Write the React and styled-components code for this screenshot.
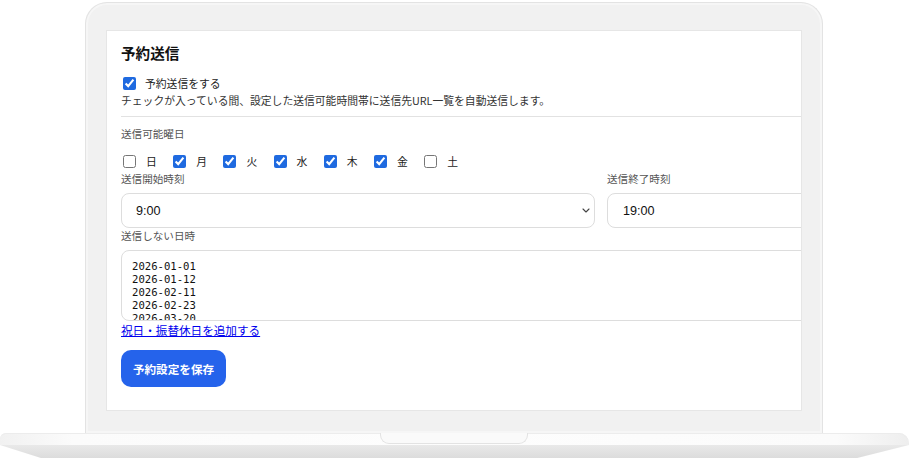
import styled, { createGlobalStyle } from "styled-components";

const GlobalStyle = createGlobalStyle`
    html, body {
        margin: 0;
        padding: 0;
        background: #ffffff;
    }
    body {
        width: 910px;
        height: 458px;
        overflow: hidden;
        font-family: "Noto Sans CJK JP", "Noto Sans", sans-serif;
    }
`;

const days = [
    { label: "日", on: false },
    { label: "月", on: true },
    { label: "火", on: true },
    { label: "水", on: true },
    { label: "木", on: true },
    { label: "金", on: true },
    { label: "土", on: false },
];

const skipDates = [
    "2026-01-01",
    "2026-01-12",
    "2026-02-11",
    "2026-02-23",
    "2026-03-20",
    "2026-04-29",
    "2026-05-04",
];

const App = () => {
    return (
        <>
            <GlobalStyle />
            <Stage>
                <Lid>
                    <Screen>
                        <Form>
                            <Title>予約送信</Title>
                            <CheckRow>
                                <Check type="checkbox" defaultChecked />
                                <CheckText>予約送信をする</CheckText>
                            </CheckRow>
                            <Help>チェックが入っている間、設定した送信可能時間帯に送信先URL一覧を自動送信します。</Help>
                            <Divider />
                            <FieldLabel $top={9}>送信可能曜日</FieldLabel>
                            <Days>
                                {days.map((d) => (
                                    <Day key={d.label}>
                                        <Check type="checkbox" defaultChecked={d.on} />
                                        <span>{d.label}</span>
                                    </Day>
                                ))}
                            </Days>
                            <TimeGrid>
                                <Field>
                                    <FieldLabel>送信開始時刻</FieldLabel>
                                    <SelectWrap>
                                        <Select defaultValue="9:00">
                                            <option>8:00</option>
                                            <option>9:00</option>
                                            <option>10:00</option>
                                        </Select>
                                        <Chevron width="8" height="5" viewBox="0 0 8 5">
                                            <path d="M1 1l3 3 3-3" fill="none" stroke="#444" strokeWidth="1.1" strokeLinecap="round" strokeLinejoin="round" />
                                        </Chevron>
                                    </SelectWrap>
                                </Field>
                                <Field>
                                    <FieldLabel>送信終了時刻</FieldLabel>
                                    <TimeInput defaultValue="19:00" />
                                </Field>
                            </TimeGrid>
                            <FieldLabel>送信しない日時</FieldLabel>
                            <DateArea defaultValue={skipDates.join("\n")} />
                            <HolidayLink href="#">祝日・振替休日を追加する</HolidayLink>
                            <SaveButton>予約設定を保存</SaveButton>
                        </Form>
                    </Screen>
                </Lid>
                <Base>
                    <BaseTop>
                        <Notch />
                    </BaseTop>
                    <BaseBottom />
                </Base>
            </Stage>
        </>
    );
};

export default App;

const Stage = styled.div`
    width: 910px;
    height: 458px;
    display: flex;
    flex-direction: column;
`;

const Lid = styled.div`
    box-sizing: border-box;
    width: 738px;
    height: 431px;
    margin: 2px 0 0 85px;
    padding: 28px 21px 23px 21px;
    background: #f1f1f1;
    border: 1px solid #e3e3e3;
    border-bottom: none;
    border-radius: 22px 22px 0 0;
    box-shadow: inset 0 0 0 2px #f6f6f6;
    display: flex;
`;

const Screen = styled.div`
    flex: 1;
    background: #ffffff;
    overflow: hidden;
    box-shadow: 0 0 0 1px #e6e6e6;
`;

const Form = styled.div`
    width: 960px;
    padding: 11px 0 0 14px;
    display: flex;
    flex-direction: column;
    align-items: flex-start;
    color: #222;
`;

const Title = styled.h2`
    margin: 0;
    font-size: 14.6px;
    line-height: 22px;
    font-weight: 700;
    color: #111;
`;

const CheckRow = styled.label`
    margin-top: 10px;
    height: 18px;
    display: flex;
    align-items: center;
    gap: 9px;
    padding-left: 2px;
`;

const Check = styled.input`
    width: 13px;
    height: 13px;
    margin: 0;
    accent-color: #1f6ae0;
`;

const CheckText = styled.span`
    font-size: 10.8px;
    color: #222;
`;

const Help = styled.p`
    margin: 0;
    font-size: 10.8px;
    line-height: 16px;
    color: #333;
`;

const Divider = styled.hr`
    align-self: stretch;
    margin: 8px 0 0 0;
    border: none;
    border-top: 1px solid #e2e2e2;
`;

const FieldLabel = styled.div`
    margin-top: ${(p) => p.$top || 0}px;
    font-size: 10.6px;
    line-height: 16px;
    color: #555;
`;

const Days = styled.div`
    margin-top: 10px;
    height: 18px;
    padding-left: 2px;
    display: flex;
    align-items: center;
    gap: 16.2px;
`;

const Day = styled.label`
    display: inline-flex;
    align-items: center;
    gap: 10px;
    font-size: 10.8px;
    color: #222;

    span {
        width: 11px;
    }
`;

const TimeGrid = styled.div`
    margin-top: 1px;
    display: grid;
    grid-template-columns: 474px 474px;
    column-gap: 12px;
`;

const Field = styled.div`
    display: flex;
    flex-direction: column;
    gap: 6px;
`;

const SelectWrap = styled.div`
    position: relative;
`;

const boxBase = `
    box-sizing: border-box;
    width: 100%;
    height: 35px;
    border: 1px solid #dddddd;
    border-radius: 8px;
    background: #ffffff;
    font-family: "Liberation Sans", Arial, sans-serif;
    font-size: 12.6px;
    color: #111;
    outline: none;
`;

const Select = styled.select`
    ${boxBase}
    appearance: none;
    padding: 0 0 0 14px;
`;

const Chevron = styled.svg`
    position: absolute;
    right: 5px;
    top: 15px;
    pointer-events: none;
`;

const TimeInput = styled.input`
    ${boxBase}
    padding: 0 0 0 15px;
`;

const DateArea = styled.textarea`
    box-sizing: border-box;
    width: 960px;
    height: 71px;
    margin-top: 6px;
    padding: 9px 10px;
    border: 1px solid #dddddd;
    border-radius: 8px;
    resize: none;
    overflow: hidden;
    font-family: "DejaVu Sans Mono", "Liberation Mono", monospace;
    font-size: 10.6px;
    line-height: 13px;
    color: #111;
    outline: none;
`;

const HolidayLink = styled.a`
    margin-top: 1px;
    font-size: 11.6px;
    line-height: 16px;
    color: #0000ee;
    text-decoration: underline;
`;

const SaveButton = styled.button`
    margin-top: 12px;
    width: 105px;
    height: 37px;
    border: none;
    border-radius: 10px;
    background: #2563eb;
    color: #ffffff;
    font-family: "Noto Sans CJK JP", sans-serif;
    font-size: 11.6px;
    font-weight: 700;
    cursor: pointer;
`;

const Base = styled.div`
    display: flex;
    flex-direction: column;
    width: 909px;
`;

const BaseTop = styled.div`
    height: 12px;
    display: flex;
    justify-content: center;
    background: linear-gradient(90deg, #f1f1f1 0%, #fbfbfb 8%, #fdfdfd 50%, #fbfbfb 92%, #eeeeee 100%);
    border-radius: 6px 10px 0 0;
    box-shadow: inset 0 1px 0 #ececec;
`;

const Notch = styled.div`
    box-sizing: border-box;
    width: 148px;
    height: 11px;
    margin-left: -2px;
    background: #fafafa;
    border: 1px solid #e3e3e3;
    border-top: none;
    border-radius: 0 0 9px 9px;
`;

const BaseBottom = styled.div`
    height: 13px;
    background: linear-gradient(180deg, #e9e9e9 0%, #dcdcdc 100%);
    clip-path: polygon(0 0, 100% 0, 94.3% 100%, 4.5% 100%);
`;
